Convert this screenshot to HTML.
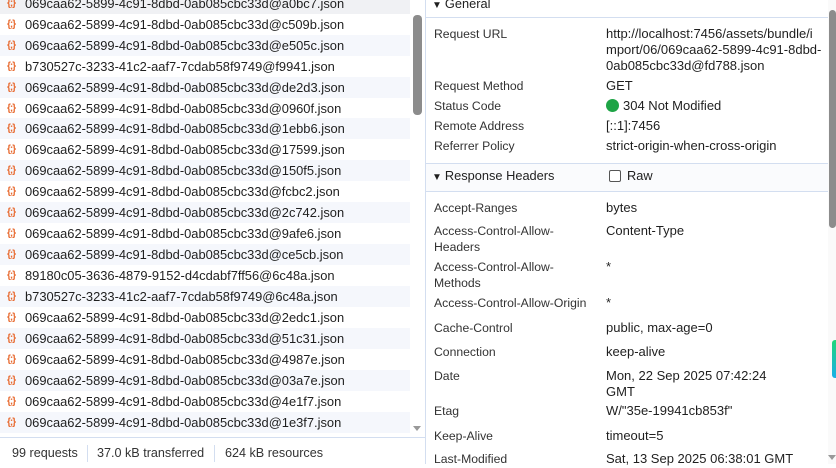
<!DOCTYPE html>
<html><head><style>
*{margin:0;padding:0;box-sizing:border-box}
body{width:836px;height:464px;overflow:hidden;background:#fff;font-family:"Liberation Sans","Noto Sans CJK SC",sans-serif;font-size:12px;color:#1f1f1f;position:relative}
#left{position:absolute;left:0;top:0;width:425px;height:437px;overflow:hidden}
.row{position:absolute;left:0;width:410px;height:21px;line-height:21px;padding-left:25px;white-space:nowrap;font-size:12.9px}
.row.alt{background:#f5f7fc}
.row.sel{background:#f0f1f4}
.ic{position:absolute;left:7px;top:0;color:#e8692e;font-size:10px;font-weight:bold;letter-spacing:-1px}
#vb{position:absolute;left:425px;top:0;width:1px;height:464px;background:#d3def0}
#foot{position:absolute;left:0;top:437px;width:425px;height:27px;border-top:1px solid #d3def0;line-height:30px;font-size:12.6px;color:#333}
#foot span{position:absolute;top:0}
.sep{position:absolute;top:7px;width:1px;height:17px;background:#d3def0}
.lb{position:absolute;left:434px;color:#333;font-size:12.2px;line-height:16px}
.vl{position:absolute;left:606px;color:#1f1f1f;font-size:13px;line-height:16px;width:224px;white-space:nowrap}
.hd{position:absolute;left:426px;width:402px;font-size:12.8px;line-height:16px}
.ar{font-size:10px;display:inline-block;margin-right:3px}
</style></head><body>
<div id="left">
<div class="row sel" style="top:-7px"><span class="ic">{;}</span>069caa62-5899-4c91-8dbd-0ab085cbc33d@a0bc7.json</div>
<div class="row" style="top:14px"><span class="ic">{;}</span>069caa62-5899-4c91-8dbd-0ab085cbc33d@c509b.json</div>
<div class="row alt" style="top:35px"><span class="ic">{;}</span>069caa62-5899-4c91-8dbd-0ab085cbc33d@e505c.json</div>
<div class="row" style="top:56px"><span class="ic">{;}</span>b730527c-3233-41c2-aaf7-7cdab58f9749@f9941.json</div>
<div class="row alt" style="top:77px"><span class="ic">{;}</span>069caa62-5899-4c91-8dbd-0ab085cbc33d@de2d3.json</div>
<div class="row" style="top:98px"><span class="ic">{;}</span>069caa62-5899-4c91-8dbd-0ab085cbc33d@0960f.json</div>
<div class="row alt" style="top:118px"><span class="ic">{;}</span>069caa62-5899-4c91-8dbd-0ab085cbc33d@1ebb6.json</div>
<div class="row" style="top:139px"><span class="ic">{;}</span>069caa62-5899-4c91-8dbd-0ab085cbc33d@17599.json</div>
<div class="row alt" style="top:160px"><span class="ic">{;}</span>069caa62-5899-4c91-8dbd-0ab085cbc33d@150f5.json</div>
<div class="row" style="top:181px"><span class="ic">{;}</span>069caa62-5899-4c91-8dbd-0ab085cbc33d@fcbc2.json</div>
<div class="row alt" style="top:202px"><span class="ic">{;}</span>069caa62-5899-4c91-8dbd-0ab085cbc33d@2c742.json</div>
<div class="row" style="top:223px"><span class="ic">{;}</span>069caa62-5899-4c91-8dbd-0ab085cbc33d@9afe6.json</div>
<div class="row alt" style="top:244px"><span class="ic">{;}</span>069caa62-5899-4c91-8dbd-0ab085cbc33d@ce5cb.json</div>
<div class="row" style="top:265px"><span class="ic">{;}</span>89180c05-3636-4879-9152-d4cdabf7ff56@6c48a.json</div>
<div class="row alt" style="top:286px"><span class="ic">{;}</span>b730527c-3233-41c2-aaf7-7cdab58f9749@6c48a.json</div>
<div class="row" style="top:307px"><span class="ic">{;}</span>069caa62-5899-4c91-8dbd-0ab085cbc33d@2edc1.json</div>
<div class="row alt" style="top:328px"><span class="ic">{;}</span>069caa62-5899-4c91-8dbd-0ab085cbc33d@51c31.json</div>
<div class="row" style="top:349px"><span class="ic">{;}</span>069caa62-5899-4c91-8dbd-0ab085cbc33d@4987e.json</div>
<div class="row alt" style="top:370px"><span class="ic">{;}</span>069caa62-5899-4c91-8dbd-0ab085cbc33d@03a7e.json</div>
<div class="row" style="top:391px"><span class="ic">{;}</span>069caa62-5899-4c91-8dbd-0ab085cbc33d@4e1f7.json</div>
<div class="row alt" style="top:412px"><span class="ic">{;}</span>069caa62-5899-4c91-8dbd-0ab085cbc33d@1e3f7.json</div>
<div style="position:absolute;left:413px;top:15px;width:9px;height:100px;border-radius:4px;background:#8c8c8c"></div>
<div style="position:absolute;left:413px;top:426px;width:0;height:0;border-left:4px solid transparent;border-right:4px solid transparent;border-top:5px solid #999"></div>
</div>
<div id="vb"></div>
<div id="foot">
<span style="left:12px">99 requests</span><div class="sep" style="left:87px"></div>
<span style="left:97px">37.0 kB transferred</span><div class="sep" style="left:214px"></div>
<span style="left:225px">624 kB resources</span>
</div>

<div class="hd" style="top:-4px;height:22px;border-bottom:1px solid #d3def0;padding-left:6px"><span class="ar">▼</span>General</div>
<div class="lb" style="top:26px">Request URL</div>
<div class="vl" style="top:26px">http://localhost:7456/assets/bundle/i<br>mport/06/069caa62-5899-4c91-8dbd-<br>0ab085cbc33d@fd788.json</div>
<div class="lb" style="top:78px">Request Method</div><div class="vl" style="top:78px">GET</div>
<div class="lb" style="top:98px">Status Code</div><div class="vl" style="top:98px"><span style="display:inline-block;width:13px;height:13px;border-radius:50%;background:#1ea446;vertical-align:-2px;margin-right:4px"></span>304 Not Modified</div>
<div class="lb" style="top:118px">Remote Address</div><div class="vl" style="top:118px">[::1]:7456</div>
<div class="lb" style="top:138px">Referrer Policy</div><div class="vl" style="top:138px">strict-origin-when-cross-origin</div>
<div class="hd" style="top:163px;height:29px;border-top:1px solid #d3def0;border-bottom:1px solid #d3def0;background:#fafbfd;padding:4px 0 0 6px"><span class="ar">▼</span>Response Headers<span style="position:absolute;left:183px;top:6px;width:12px;height:12px;border:1px solid #555;border-radius:2px;background:#fff"></span><span style="position:absolute;left:201px;top:4px">Raw</span></div>
<div class="lb" style="top:200px">Accept-Ranges</div><div class="vl" style="top:200px">bytes</div>
<div class="lb" style="top:223px">Access-Control-Allow-<br>Headers</div><div class="vl" style="top:223px">Content-Type</div>
<div class="lb" style="top:259px">Access-Control-Allow-<br>Methods</div><div class="vl" style="top:259px">*</div>
<div class="lb" style="top:295px">Access-Control-Allow-Origin</div><div class="vl" style="top:295px">*</div>
<div class="lb" style="top:320px">Cache-Control</div><div class="vl" style="top:320px">public, max-age=0</div>
<div class="lb" style="top:344px">Connection</div><div class="vl" style="top:344px">keep-alive</div>
<div class="lb" style="top:368px">Date</div><div class="vl" style="top:368px">Mon, 22 Sep 2025 07:42:24<br>GMT</div>
<div class="lb" style="top:403px">Etag</div><div class="vl" style="top:403px">W/"35e-19941cb853f"</div>
<div class="lb" style="top:428px">Keep-Alive</div><div class="vl" style="top:428px">timeout=5</div>
<div class="lb" style="top:451px">Last-Modified</div><div class="vl" style="top:451px">Sat, 13 Sep 2025 06:38:01 GMT</div>

<div style="position:absolute;left:828px;top:0;width:8px;height:464px;background:#fafafa"></div>
<div style="position:absolute;left:829px;top:10px;width:7px;height:218px;border-radius:4px;background:#8c8c8c"></div>
<div style="position:absolute;left:832px;top:340px;width:4px;height:38px;border-radius:3px 0 0 3px;background:linear-gradient(#1fd67a,#1ab0e8)"></div>
<div style="position:absolute;left:828px;top:455px;width:0;height:0;border-left:4px solid transparent;border-right:4px solid transparent;border-top:5px solid #999"></div>
</body></html>
